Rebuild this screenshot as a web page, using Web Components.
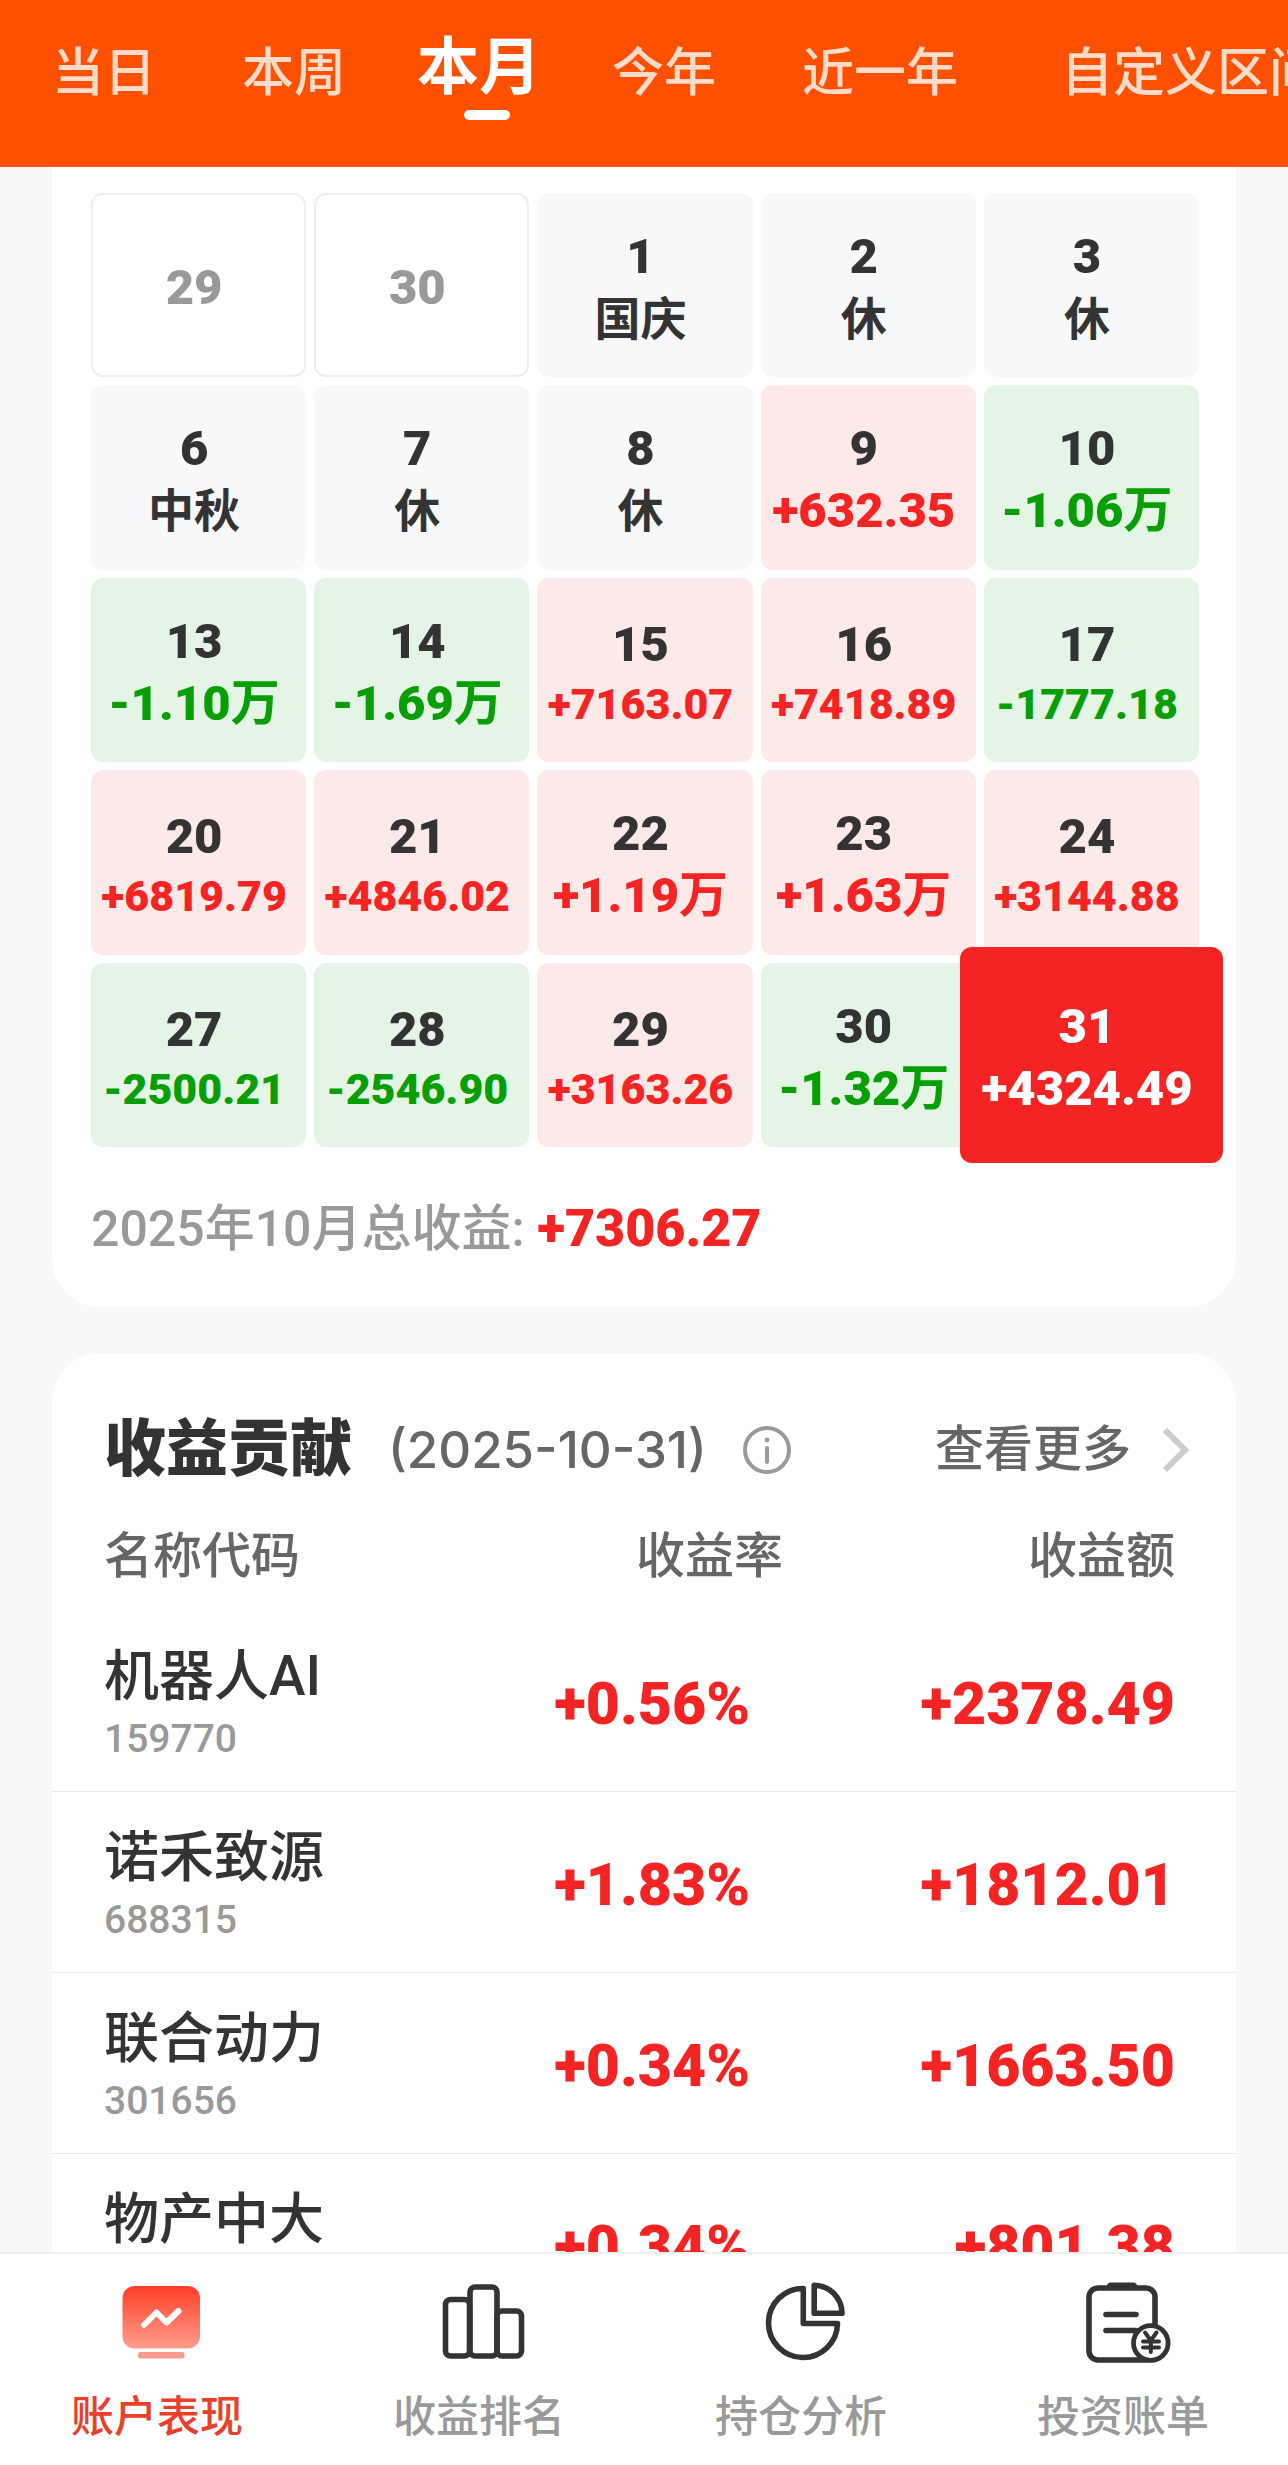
<!DOCTYPE html>
<html lang="zh-CN">
<head>
<meta charset="utf-8">
<meta name="viewport" content="width=device-width, initial-scale=1">
<title>账户表现</title>
<style>
  html, body {
    margin: 0;
    height: 100%;
  }

  body {
    --red: #f32423;
    --green: #089f06;
    --ink: #333;
    --muted: #666;
    --faint: #999;
    --line: #eee;
    --page: #f7f8fa;
    display: flex;
    flex-direction: column;
    background: var(--page);
    color: var(--ink);
    font-family: Roboto, "Noto Sans CJK SC", sans-serif;
    font-weight: 500;
  }

  main {
    flex: 1;
    min-height: 0;
    overflow-y: auto;
    scrollbar-width: none;
    padding: 0 52px;
  }
</style>
</head>
<body>
  <period-tabs>
    <period-tab>当日</period-tab>
    <period-tab>本周</period-tab>
    <period-tab active>本月</period-tab>
    <period-tab>今年</period-tab>
    <period-tab>近一年</period-tab>
    <period-tab last>自定义区间</period-tab>
  </period-tabs>

  <main>
    <profit-calendar label="2025年10月总收益:" total="+7306.27">
      <calendar-day day="29" type="outside"></calendar-day>
      <calendar-day day="30" type="outside"></calendar-day>
      <calendar-day day="1" note="国庆"></calendar-day>
      <calendar-day day="2" note="休"></calendar-day>
      <calendar-day day="3" note="休"></calendar-day>
      <calendar-day day="6" note="中秋"></calendar-day>
      <calendar-day day="7" note="休"></calendar-day>
      <calendar-day day="8" note="休"></calendar-day>
      <calendar-day day="9" type="up" amount="+632.35"></calendar-day>
      <calendar-day day="10" type="down" amount="-1.06" unit="万"></calendar-day>
      <calendar-day day="13" type="down" amount="-1.10" unit="万"></calendar-day>
      <calendar-day day="14" type="down" amount="-1.69" unit="万"></calendar-day>
      <calendar-day day="15" type="up" amount="+7163.07"></calendar-day>
      <calendar-day day="16" type="up" amount="+7418.89"></calendar-day>
      <calendar-day day="17" type="down" amount="-1777.18"></calendar-day>
      <calendar-day day="20" type="up" amount="+6819.79"></calendar-day>
      <calendar-day day="21" type="up" amount="+4846.02"></calendar-day>
      <calendar-day day="22" type="up" amount="+1.19" unit="万"></calendar-day>
      <calendar-day day="23" type="up" amount="+1.63" unit="万"></calendar-day>
      <calendar-day day="24" type="up" amount="+3144.88"></calendar-day>
      <calendar-day day="27" type="down" amount="-2500.21"></calendar-day>
      <calendar-day day="28" type="down" amount="-2546.90"></calendar-day>
      <calendar-day day="29" type="up" amount="+3163.26"></calendar-day>
      <calendar-day day="30" type="down" amount="-1.32" unit="万"></calendar-day>
      <calendar-day day="31" type="up" amount="+4324.49" selected></calendar-day>
    </profit-calendar>

    <profit-contribution date="2025-10-31"></profit-contribution>
  </main>

  <bottom-nav>
    <nav-item icon="account" active>账户表现</nav-item>
    <nav-item icon="ranking">收益排名</nav-item>
    <nav-item icon="position">持仓分析</nav-item>
    <nav-item icon="bill">投资账单</nav-item>
  </bottom-nav>

<script>
const attach = (element, html) => {
  const template = document.createElement('template')
  template.innerHTML = html
  element.attachShadow({ mode: 'open' }).appendChild(template.content.cloneNode(true))
}

class PeriodTabs extends HTMLElement {
  constructor () {
    super()
    attach(this, `
      <style>
        :host {
          display: block;
          flex: none;
          background: #ff5000;
          overflow: hidden;
        }

        nav {
          display: flex;
          align-items: center;
          height: 148px;
          padding: 0 0 19px 9px;
        }
      </style>
      <nav><slot></slot></nav>
    `)
  }
}

class PeriodTab extends HTMLElement {
  constructor () {
    super()
    attach(this, `
      <style>
        :host {
          display: block;
          flex: none;
        }

        :host([last]) {
          margin-left: 17px;
        }

        button {
          position: relative;
          display: block;
          border: 0;
          margin: 0;
          padding: 0 43px;
          background: none;
          color: #ffdcca;
          font: inherit;
          font-size: 52px;
          line-height: 80px;
          white-space: nowrap;
        }

        :host([active]) button {
          padding: 0 28px 12px;
          color: #fff;
          font-size: 62px;
          font-weight: 700;
        }

        /* short bar under the current period */
        :host([active]) button::after {
          content: "";
          position: absolute;
          left: calc(50% - 15px);
          bottom: 0;
          width: 46px;
          height: 10px;
          border-radius: 5px;
          background: #fff;
        }
      </style>
      <button type="button"><slot></slot></button>
    `)
  }
}

class ProfitCalendar extends HTMLElement {
  constructor () {
    super()
    attach(this, `
      <style>
        :host {
          display: block;
          padding: 26px 37px 46px 39px;
          border-radius: 0 0 48px 48px;
          background: #fff;
        }

        .days {
          display: grid;
          grid-template-columns: repeat(5, minmax(0, 1fr));
          gap: 8px;
        }

        p {
          margin: 50px 0 0;
          color: var(--faint);
          font-size: 50px;
          line-height: 64px;
        }

        strong {
          color: var(--red);
          font-size: 52px;
          font-weight: 900;
        }
      </style>
      <div class="days"><slot></slot></div>
      <p><span id="label"></span> <strong id="total"></strong></p>
    `)
  }

  connectedCallback () {
    this.shadowRoot.querySelector('#label').textContent = this.getAttribute('label')
    this.shadowRoot.querySelector('#total').textContent = this.getAttribute('total')
  }
}

class CalendarDay extends HTMLElement {
  constructor () {
    super()
    attach(this, `
      <style>
        :host {
          position: relative;
          display: block;
          box-sizing: border-box;
          aspect-ratio: 7 / 6;
          border-radius: 12px;
          background: var(--page);
          font-size: 49px;
          font-weight: 900;
          line-height: 62px;
        }

        :host([type="outside"]) {
          border: 2px solid var(--line);
          background: #fff;
          color: var(--faint);
        }

        :host([type="up"]) { background: #fce9e8; --tone: var(--red); }
        :host([type="down"]) { background: #e4f4e5; --tone: var(--green); }

        :host([selected]) {
          z-index: 1;
          color: #fff;
          --tone: #fff;
        }

        /* the picked day grows over its neighbours */
        :host([selected])::before {
          content: "";
          position: absolute;
          inset: -16px -24px;
          border-radius: 12px;
          background: var(--red);
        }

        div {
          position: relative;
          display: flex;
          flex-direction: column;
          align-items: center;
          justify-content: center;
          box-sizing: border-box;
          height: 100%;
          padding: 5px 9px 0 0;
          white-space: nowrap;
        }

        .note {
          font-size: 46px;
          font-weight: 700;
        }

        .amount { color: var(--tone); }
        .amount b { font-weight: 700; }

        .long {
          font-size: 43px;
          line-height: 56px;
        }
      </style>
      <div><span id="day"></span></div>
    `)
  }

  connectedCallback () {
    this.shadowRoot.querySelector('#day').textContent = this.getAttribute('day')

    if (this.hasAttribute('note')) {
      this.#addLine('note', this.getAttribute('note'))
    }

    if (this.hasAttribute('amount')) {
      const amount = this.getAttribute('amount')
      const line = this.#addLine('amount', amount)
      if (amount.length > 7 && !this.hasAttribute('selected')) {
        line.classList.add('long')
      }
      if (this.hasAttribute('unit')) {
        const unit = document.createElement('b')
        unit.textContent = this.getAttribute('unit')
        line.appendChild(unit)
      }
    }
  }

  #addLine (name, text) {
    const line = document.createElement('span')
    line.className = name
    line.textContent = text
    this.shadowRoot.querySelector('div').appendChild(line)
    return line
  }
}

const holdings = [
  { name: '机器人AI', code: '159770', rate: '+0.56%', profit: '+2378.49' },
  { name: '诺禾致源', code: '688315', rate: '+1.83%', profit: '+1812.01' },
  { name: '联合动力', code: '301656', rate: '+0.34%', profit: '+1663.50' },
  { name: '物产中大', code: '600704', rate: '+0.34%', profit: '+801.38' }
]

class ProfitContribution extends HTMLElement {
  constructor () {
    super()
    attach(this, `
      <style>
        :host {
          display: block;
          margin-top: 46px;
          padding-top: 57px;
          border-radius: 48px 48px 0 0;
          background: #fff;
        }

        header {
          display: flex;
          align-items: center;
          padding: 0 45px 0 52px;
          color: var(--muted);
          font-size: 49px;
          line-height: 80px;
        }

        h2 {
          margin: 0 36px 0 0;
          color: var(--ink);
          font-size: 62px;
          font-weight: 900;
        }

        time {
          font-family: Inter, "Noto Sans CJK SC", sans-serif;
          font-size: 51px;
        }

        svg {
          display: block;
          fill: none;
        }

        button {
          margin: 0 0 0 36px;
          border: 0;
          padding: 0;
          background: none;
        }

        a {
          display: flex;
          align-items: center;
          gap: 30px;
          margin-left: auto;
          color: inherit;
          text-decoration: none;
        }

        table {
          width: 100%;
          border-collapse: collapse;
          table-layout: fixed;
        }

        th {
          box-sizing: border-box;
          height: 120px;
          padding: 14px 0 0;
          color: var(--muted);
          font-size: 49px;
          font-weight: 500;
          line-height: 64px;
          text-align: right;
        }

        td {
          box-sizing: border-box;
          height: 181px;
          padding: 6px 0 0;
          border-bottom: 1px solid #e9e9e9;
          color: var(--red);
          font-size: 59px;
          font-weight: 900;
          line-height: 70px;
          text-align: right;
        }

        th:first-child, td:first-child {
          padding-left: 52px;
          text-align: left;
        }

        th:last-child, td:last-child { padding-right: 61px; }
        th:nth-child(2) { padding-right: 3px; }
        td:nth-child(2) { padding-right: 36px; }

        .name, .code { display: block; }

        .name {
          color: var(--ink);
          font-size: 55px;
          font-weight: 500;
        }

        .code {
          color: var(--faint);
          font-size: 39px;
          font-weight: 500;
          line-height: 56px;
        }
      </style>
      <header>
        <h2>收益贡献</h2>
        <time></time>
        <button type="button" aria-label="说明">
          <svg width="48" height="48" viewBox="0 0 48 48" stroke="#999">
            <circle cx="24" cy="24" r="22" stroke-width="4"/>
            <path d="M24 22v14" stroke-width="4" stroke-linecap="round"/>
            <circle cx="24" cy="14" r="2.4" fill="#999" stroke="none"/>
          </svg>
        </button>
        <a href="#more">查看更多
          <svg width="30" height="48" viewBox="0 0 30 48" stroke="#ccc" stroke-width="6">
            <path d="M4 4l20 20-20 20"/>
          </svg>
        </a>
      </header>
      <table>
        <colgroup><col style="width: 34%"><col style="width: 28%"><col></colgroup>
        <thead>
          <tr><th scope="col">名称代码</th><th scope="col">收益率</th><th scope="col">收益额</th></tr>
        </thead>
        <tbody></tbody>
      </table>
    `)
  }

  connectedCallback () {
    const date = this.getAttribute('date')
    const time = this.shadowRoot.querySelector('time')
    time.dateTime = date
    time.textContent = `(${date})`

    this.shadowRoot.querySelector('tbody').innerHTML = holdings.map(item => `
      <tr>
        <td><span class="name">${item.name}</span><span class="code">${item.code}</span></td>
        <td>${item.rate}</td>
        <td>${item.profit}</td>
      </tr>
    `).join('')
  }
}

const icons = {
  account: `
    <defs>
      <linearGradient id="fade" x1="0" y1="0" x2="0" y2="1">
        <stop offset="0" stop-color="#ff3f26"/>
        <stop offset="1" stop-color="#ff9d90"/>
      </linearGradient>
    </defs>
    <rect x="5.5" y="8" width="77.5" height="62.5" rx="12" fill="url(#fade)"/>
    <path d="M27 47L39.5 34.5l10 10L61.5 33" stroke="#fff" stroke-width="6"/>
    <rect x="21" y="74" width="46.5" height="6.5" rx="2.5" fill="#f59b8f"/>`,
  ranking: `
    <g stroke="#333" stroke-width="5.6">
      <rect x="6.5" y="21.5" width="24" height="56.5" rx="5"/>
      <rect x="31" y="9" width="27" height="69" rx="5"/>
      <rect x="58" y="33" width="24.5" height="45" rx="5"/>
    </g>`,
  position: `
    <g stroke="#333" stroke-width="5.6">
      <path d="M42.3 10.5A34.5 34.5 0 1 0 76.5 45.5H42.3z"/>
      <path d="M53.2 7.2V35.2H81A28 28 0 0 0 53.2 7.2z"/>
    </g>`,
  bill: `
    <g stroke="#333" stroke-width="5.6">
      <rect x="6" y="10" width="66" height="72" rx="9"/>
      <path d="M23 36.500H53M23 52.500H53"/>
      <path d="M28 4.500H50Q54 4.500 54 8V12H24V8Q24 4.500 28 4.500z" fill="#333" stroke="none"/>
      <circle cx="67.8" cy="65" r="17.3" fill="#fff" stroke-width="4.8"/>
      <path d="M62 54.500L67.800 62.500 73.500 54.500M67.800 62.500V74M60 63.500H76M60 69.500H76" stroke-width="4"/>
    </g>`
}

class BottomNav extends HTMLElement {
  constructor () {
    super()
    attach(this, `
      <style>
        :host {
          display: block;
          flex: none;
          border-top: 2px solid var(--line);
          background: #fff;
        }

        nav {
          display: grid;
          grid-template-columns: repeat(4, 1fr);
        }
      </style>
      <nav><slot></slot></nav>
    `)
  }
}

class NavItem extends HTMLElement {
  constructor () {
    super()
    attach(this, `
      <style>
        :host { display: block; }

        a {
          display: flex;
          flex-direction: column;
          align-items: center;
          gap: 23px;
          padding: 24px 0 20px;
          color: var(--faint);
          font-size: 43px;
          line-height: 56px;
          text-decoration: none;
        }

        :host([active]) a { color: #e9402b; }

        svg {
          display: block;
          fill: none;
          stroke-linecap: round;
          stroke-linejoin: round;
        }

        span { padding-right: 8px; }
      </style>
      <a href="#">
        <svg width="88" height="88" viewBox="0 0 88 88"></svg>
        <span><slot></slot></span>
      </a>
    `)
  }

  connectedCallback () {
    const icon = this.getAttribute('icon')
    this.shadowRoot.querySelector('svg').innerHTML = icons[icon]
    this.shadowRoot.querySelector('a').href = `#${icon}`
  }
}

customElements.define('period-tabs', PeriodTabs)
customElements.define('period-tab', PeriodTab)
customElements.define('profit-calendar', ProfitCalendar)
customElements.define('calendar-day', CalendarDay)
customElements.define('profit-contribution', ProfitContribution)
customElements.define('bottom-nav', BottomNav)
customElements.define('nav-item', NavItem)
</script>
</body>
</html>
